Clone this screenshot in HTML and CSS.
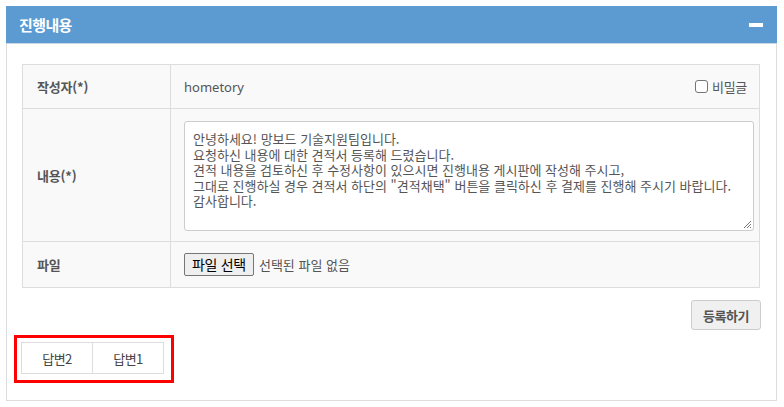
FILE: index.html
```html
<!DOCTYPE html>
<html lang="ko">
<head>
<meta charset="utf-8">
<link rel="stylesheet" href="styles.css">
</head>
<body>
<div class="panel">
  <div class="panel-head">
    <span class="panel-title">진행내용</span>
    <span class="minus"></span>
  </div>
  <div class="panel-body">
    <table class="form">
      <tr class="r1">
        <th>작성자(*)</th>
        <td>
          <div class="writer">
            <span>hometory</span>
            <label class="secret"><span class="cbox"></span>비밀글</label>
          </div>
        </td>
      </tr>
      <tr class="r2">
        <th>내용(*)</th>
        <td class="ta-cell">
          <div class="textarea">안녕하세요! 망보드 기술지원팀입니다.
요청하신 내용에 대한 견적서 등록해 드렸습니다.
견적 내용을 검토하신 후 수정사항이 있으시면 진행내용 게시판에 작성해 주시고,
그대로 진행하실 경우 견적서 하단의 "견적채택" 버튼을 클릭하신 후 결제를 진행해 주시기 바랍니다.
감사합니다.<svg class="grip" width="9" height="9" viewBox="0 0 9 9"><path d="M8 1L1 8M8 4L4 8M8 7L7 8" stroke="#777" stroke-width="1"/></svg></div>
        </td>
      </tr>
      <tr class="r3">
        <th>파일</th>
        <td>
          <span class="filebtn">파일 선택</span><span class="nofile">선택된 파일 없음</span>
        </td>
      </tr>
    </table>
    <div class="actions">
      <button class="submit">등록하기</button>
    </div>
    <div class="tabs-wrap">
      <div class="tabs">
        <span class="tab">답변2</span>
        <span class="tab">답변1</span>
      </div>
      <div class="highlight"></div>
    </div>
  </div>
</div>
</body>
</html>
```
FILE: styles.css
```css
* { box-sizing: border-box; }
body {
  margin: 0;
  padding: 6px 7px 0 6px;
  background: #fff;
  font-family: "Noto Sans", "Noto Sans CJK KR", sans-serif;
  font-size: 13px;
  color: #555;
}
.panel {
  border: 1px solid #ddd;
  border-top: 0;
  height: 395px;
}
.panel-head {
  background: #5b9bd1;
  height: 38px;
  border-bottom: 1px solid #c8d6e2;
  margin: 0 -1px;
  display: flex;
  align-items: center;
  justify-content: space-between;
  padding: 0 14px 0 13px;
}
.panel-title {
  color: #fff;
  font-weight: bold;
  font-size: 15px;
  letter-spacing: -0.6px;
  font-family: "Noto Sans CJK KR", sans-serif;
}
.minus {
  width: 14px;
  height: 4px;
  background: #fff;
}
.panel-body {
  padding: 20px 16px 0 15px;
}
.form {
  width: 100%;
  border-collapse: collapse;
  background: #f9f9f9;
  letter-spacing: -0.2px;
}
.form th, .form td {
  border: 1px solid #ddd;
}
.form th {
  width: 148px;
  text-align: left;
  padding: 0 0 0 14px;
  font-weight: bold;
  font-family: "Noto Sans CJK KR", sans-serif;
}
.form td {
  padding: 0 12px 0 13px;
}
.r1 { height: 44px; }
.r2 { height: 133px; }
.r3 { height: 46px; }
.writer {
  display: flex;
  justify-content: space-between;
  align-items: center;
  letter-spacing: 0;
}
.secret {
  display: flex;
  align-items: center;
  gap: 4px;
  font-family: "Noto Sans CJK KR", sans-serif;
  letter-spacing: -0.3px;
}
.cbox {
  width: 13px;
  height: 13px;
  border: 1px solid #767676;
  border-radius: 3px;
  background: #fff;
}
.ta-cell { padding-top: 12px !important; padding-bottom: 10px !important; padding-right: 5px !important; }
.textarea {
  position: relative;
  height: 110px;
  background: #fff;
  border: 1px solid #ccc;
  border-radius: 3px;
  padding: 9px 8px 7px;
  white-space: pre-line;
  line-height: 15.5px;
  letter-spacing: 0;
  font-family: "Noto Sans CJK KR", sans-serif;
}
.grip {
  position: absolute;
  right: 1px;
  bottom: 1px;
}
.filebtn {
  display: inline-block;
  height: 23px;
  line-height: 21px;
  padding: 0 7px;
  background: #efefef;
  border: 1px solid #767676;
  border-radius: 2px;
  color: #000;
  font-size: 14px;
  letter-spacing: -0.3px;
  font-family: "Noto Sans CJK KR", sans-serif;
  vertical-align: middle;
}
.nofile {
  margin-left: 5px;
  vertical-align: middle;
  letter-spacing: 0;
  font-family: "Noto Sans CJK KR", sans-serif;
}
.actions {
  display: flex;
  justify-content: flex-end;
  padding-top: 12px;
  margin-right: -1px;
}
.submit {
  width: 70px;
  height: 30px;
  border: 1px solid #ccc;
  border-radius: 3px;
  background: #f0f0f0;
  color: #555;
  font-weight: bold;
  font-size: 13px;
  letter-spacing: -0.5px;
  font-family: "Noto Sans CJK KR", sans-serif;
  padding: 0;
}
.tabs-wrap {
  position: relative;
  margin-top: 12px;
  margin-left: -1px;
  width: 143px;
}
.tabs {
  display: flex;
  border: 1px solid #ddd;
  height: 32px;
}
.tab {
  flex: 1;
  display: flex;
  align-items: center;
  justify-content: center;
  color: #444;
  font-family: "Noto Sans CJK KR", sans-serif;
  letter-spacing: -0.5px;
}
.tab + .tab { border-left: 1px solid #ddd; }
.highlight {
  position: absolute;
  left: -7px;
  top: -7px;
  width: 160px;
  height: 48px;
  border: 3px solid #f00;
}
```
